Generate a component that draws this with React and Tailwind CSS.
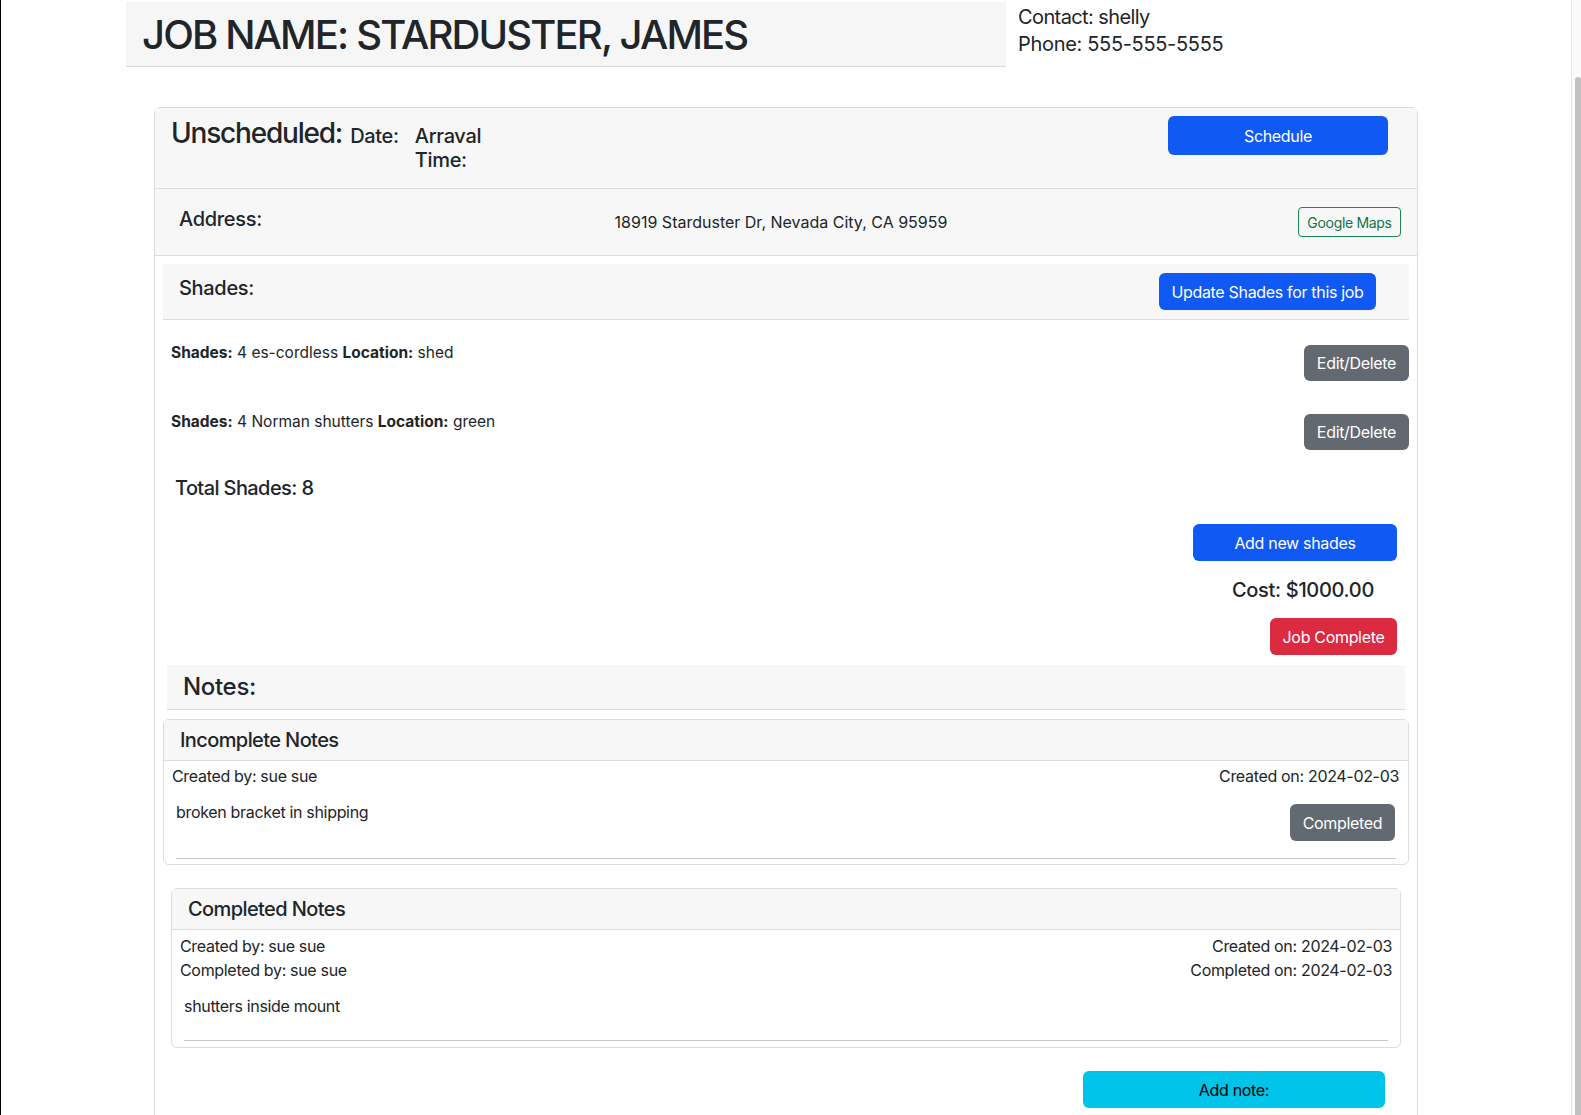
import React from "react";

const font = { fontFamily: "Inter, 'Noto Sans', sans-serif" };

function ShadeItem({ name, location, className = "" }) {
  return (
    <div className={`flex items-start justify-between pl-2 ${className}`}>
      <p className="mt-[1px] text-[15.5px] leading-[22px] tracking-normal">
        <b className="font-bold">Shades:</b> {name} <b className="font-bold">Location:</b> {location}
      </p>
      <button className="mt-[4px] h-[36px] w-[105px] rounded-md bg-[#626970] text-[16px] text-white">
        Edit/Delete
      </button>
    </div>
  );
}

export default function App() {
  return (
    <div
      className="flex min-h-screen w-full border-l border-black bg-white tracking-[-0.02em] text-[#212529]"
      style={font}
    >
      <main className="flex-1">
        <div className="mx-auto w-[1320px] px-3">
          {/* Header */}
          <div className="-mx-3 flex">
            <div className="mt-[2px] flex h-[65px] w-[880px] items-center border-b border-[#dcdcdc] bg-[#f6f6f6] px-4">
              <h1 className="mt-[2px] text-[40px] font-medium leading-none tracking-[-1.85px]">
                JOB NAME: STARDUSTER, JAMES
              </h1>
            </div>
            <div className="pl-3 pt-[4px] text-[20px] leading-[27px]">
              <p className="tracking-[-0.6px]">Contact: shelly</p>
              <p>Phone: 555-555-5555</p>
            </div>
          </div>

          {/* Card */}
          <div className="mx-4 mt-[40px] rounded-t-md border border-b-0 border-[#dcdcdc]">
            {/* Status row */}
            <div className="flex h-[81px] items-start border-b border-[#dcdcdc] bg-[#f7f7f7] pl-4">
              <div className="mt-[8px] flex items-baseline">
                <h3 className="text-[28px] font-medium leading-[34px] tracking-[-1.2px]">Unscheduled:</h3>
                <span className="ml-2 text-[20px] font-medium">Date:</span>
              </div>
              <div className="ml-4 mt-[16px] w-[81px] text-[20px] font-medium leading-[24px]">
                Arraval Time:
              </div>
              <button className="ml-auto mr-[29px] mt-[8px] h-[39px] w-[220px] rounded-md bg-[#1159f5] text-[16px] text-white">
                Schedule
              </button>
            </div>

            {/* Address row */}
            <div className="flex h-[67px] items-center border-b border-[#dcdcdc] bg-[#f7f7f7]">
              <div className="w-[109px] pl-6">
                <h5 className="mb-[6px] text-[20px] font-medium">Address:</h5>
              </div>
              <p className="flex-1 text-center text-[16px] tracking-normal">18919 Starduster Dr, Nevada City, CA 95959</p>
              <button className="mr-4 h-[30px] w-[103px] rounded border border-[#198754] text-[14px] text-[#157347]">
                Google Maps
              </button>
            </div>

            {/* Body */}
            <div className="p-2">
              <div className="flex h-[56px] items-center border-b border-[#dcdcdc] bg-[#f7f7f7] pl-4">
                <h5 className="mb-[8px] text-[20px] font-medium">Shades:</h5>
                <button className="ml-auto mr-[33px] h-[37px] w-[217px] rounded-md bg-[#1159f5] text-[16px] text-white">
                  Update Shades for this job
                </button>
              </div>

              <ShadeItem name="4 es-cordless" location="shed" className="mt-[21px] h-[69px]" />
              <ShadeItem name="4 Norman shutters" location="green" className="h-[66px]" />

              <h5 className="pl-3 text-[20px] font-medium leading-[24px] tracking-[-0.6px]">Total Shades: 8</h5>

              <div className="mt-[24px] flex flex-col items-end pr-3">
                <button className="h-[37px] w-[204px] rounded-md bg-[#1159f5] text-[16px] text-white">
                  Add new shades
                </button>
                <h5 className="mr-[23px] mt-[17px] text-[20px] font-medium leading-[24px]">Cost: $1000.00</h5>
                <button className="mt-[16px] h-[37px] w-[127px] rounded-md bg-[#dc2a41] text-[16px] text-white">
                  Job Complete
                </button>
              </div>

              {/* Notes */}
              <div className="mx-1 mt-[10px] flex h-[45px] items-center border-b border-[#dcdcdc] bg-[#f7f7f7] pl-4">
                <h4 className="text-[24px] font-medium">Notes:</h4>
              </div>

              <div className="mt-[9px] rounded-md border border-[#dcdcdc]">
                <div className="flex h-[41px] items-center border-b border-[#dcdcdc] bg-[#f7f7f7] px-4">
                  <h5 className="text-[20px] font-medium tracking-[-0.6px]">Incomplete Notes</h5>
                </div>
                <div className="px-2 pt-[3px] pb-[5px]">
                  <div className="flex justify-between pr-[1px] text-[16px] leading-[24px]">
                    <span>Created by: sue sue</span>
                    <span>Created on: 2024-02-03</span>
                  </div>
                  <div className="mt-[12px] flex items-start justify-between pl-1 pr-[5px]">
                    <p className="text-[16px] leading-[24px]">broken bracket in shipping</p>
                    <button className="mt-[4px] h-[37px] w-[105px] rounded-md bg-[#626970] text-[16px] text-white">
                      Completed
                    </button>
                  </div>
                  <hr className="mx-1 mt-[17px] border-[#c8c8c8]" />
                </div>
              </div>

              <div className="mx-2 mt-[23px] rounded-md border border-[#dcdcdc]">
                <div className="flex h-[41px] items-center border-b border-[#dcdcdc] bg-[#f7f7f7] px-4">
                  <h5 className="text-[20px] font-medium tracking-[-0.6px]">Completed Notes</h5>
                </div>
                <div className="px-2 pt-[4px] pb-[6px]">
                  <div className="flex justify-between text-[16px] leading-[24px]">
                    <div>
                      <p>Created by: sue sue</p>
                      <p>Completed by: sue sue</p>
                    </div>
                    <div className="text-right">
                      <p>Created on: 2024-02-03</p>
                      <p>Completed on: 2024-02-03</p>
                    </div>
                  </div>
                  <p className="mt-[12px] pl-1 text-[16px] leading-[24px]">shutters inside mount</p>
                  <hr className="mx-1 mt-[22px] border-[#c8c8c8]" />
                </div>
              </div>

              <div className="mt-[23px] flex justify-end pr-[24px]">
                <button className="h-[37px] w-[302px] rounded-md bg-[#00c3e9] text-[16px] text-black">
                  Add note:
                </button>
              </div>
              <div className="h-[20px]" />
            </div>
          </div>
        </div>
      </main>

      {/* scrollbar strip */}
      <aside className="w-[10px] shrink-0 border-l border-[#e6e6e6] bg-[#fafafa]">
        <div className="ml-[3px] mt-[77px] h-[1100px] w-[6px] rounded-t-full bg-[#c1c1c1]" />
      </aside>
    </div>
  );
}
